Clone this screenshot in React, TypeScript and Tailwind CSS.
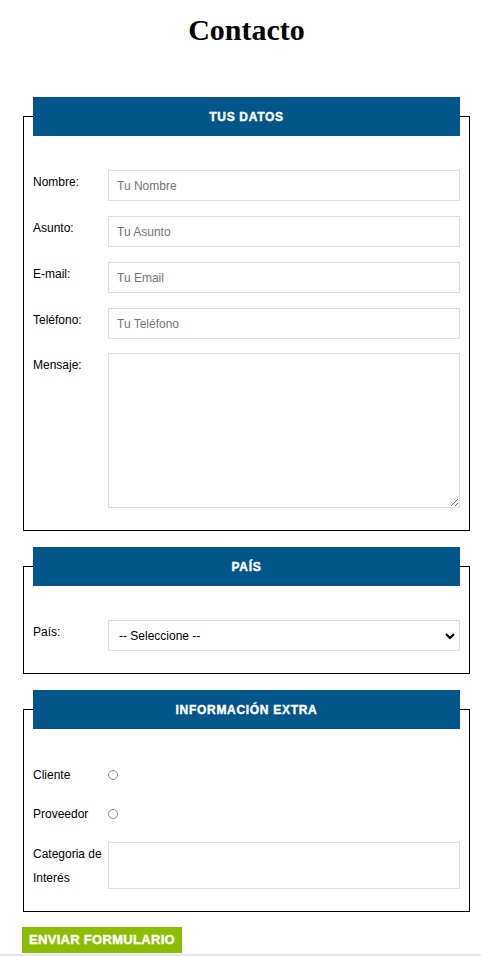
import React from "react";

const legendCls =
  "h-[39px] -mt-[20px] bg-[#02568a] text-white flex items-center justify-center text-[12px] font-bold tracking-[0.7px] [-webkit-text-stroke:0.4px_white]";

const inputCls =
  "flex-1 h-[31px] border border-[#dedede] px-[8px] text-[12px] text-black placeholder:text-[#757575] outline-none bg-white";

function Row({ label, children, className = "" }: { label: string; children: React.ReactNode; className?: string }) {
  return (
    <div className={"flex " + className}>
      <label className="w-[75px] shrink-0 text-[12px] leading-[24px] text-black">{label}</label>
      {children}
    </div>
  );
}

function Radio() {
  return (
    <div className="h-[24px] flex items-center">
      <span className="block w-[10px] h-[10px] rounded-full border border-[#8a8a8a] bg-white" />
    </div>
  );
}

export default function App() {
  return (
    <div className="w-[481px] min-h-[956px] bg-white flex flex-col" style={{ fontFamily: '"Liberation Sans", Arial, sans-serif' }}>
      <h1
        className="pl-[12px] mt-[13px] text-center text-[30px] leading-[34px] font-bold text-black"
        style={{ fontFamily: '"Liberation Serif", "Times New Roman", serif' }}
      >
        Contacto
      </h1>

      {/* Fieldset 1 */}
      <div className="ml-[23px] w-[447px] mt-[69px] border border-black px-[9px] pb-[22px]">
        <div className={legendCls}>TUS DATOS</div>
        <div className="flex flex-col pt-[34px]">
          <Row label="Nombre:">
            <input className={inputCls} placeholder="Tu Nombre" />
          </Row>
          <Row label="Asunto:" className="mt-[15px]">
            <input className={inputCls} placeholder="Tu Asunto" />
          </Row>
          <Row label="E-mail:" className="mt-[15px]">
            <input className={inputCls} placeholder="Tu Email" />
          </Row>
          <Row label="Teléfono:" className="mt-[15px]">
            <input className={inputCls} placeholder="Tu Teléfono" />
          </Row>
          <Row label="Mensaje:" className="mt-[14px]">
            <textarea className="flex-1 h-[155px] border border-[#dedede] bg-white outline-none" />
          </Row>
        </div>
      </div>

      {/* Fieldset 2 */}
      <div className="ml-[23px] w-[447px] mt-[35px] border border-black px-[9px] pb-[22px]">
        <div className={legendCls}>PAÍS</div>
        <div className="pt-[34px]">
          <Row label="País:">
            <div className="flex-1 h-[31px] border border-[#dedede] bg-white flex items-center justify-between pl-[10px] pr-[3px]">
              <span className="text-[12px] text-black">-- Seleccione --</span>
              <svg width="12" height="12" viewBox="0 0 12 12">
                <path d="M2 4 L6 8 L10 4" fill="none" stroke="black" strokeWidth="2.2" />
              </svg>
            </div>
          </Row>
        </div>
      </div>

      {/* Fieldset 3 */}
      <div className="ml-[23px] w-[447px] mt-[35px] border border-black px-[9px] pb-[21px]">
        <div className={legendCls}>INFORMACIÓN EXTRA</div>
        <div className="flex flex-col pt-[34px]">
          <Row label="Cliente">
            <Radio />
          </Row>
          <Row label="Proveedor" className="mt-[15px]">
            <Radio />
          </Row>
          <Row label="Categoria de Interés" className="mt-[16px]">
            <div className="flex-1 h-[47px] border border-[#dedede] bg-white" />
          </Row>
        </div>
      </div>

      <div className="mt-[15px] ml-[22px]">
        <button className="h-[26px] w-[160px] bg-[#8cbe00] text-white text-[13px] font-bold tracking-[0.3px] [-webkit-text-stroke:0.4px_white] flex items-center justify-center">
          ENVIAR FORMULARIO
        </button>
      </div>
      <div className="h-[3px] bg-[#e6e6e6] mt-[1px]" />
    </div>
  );
}
